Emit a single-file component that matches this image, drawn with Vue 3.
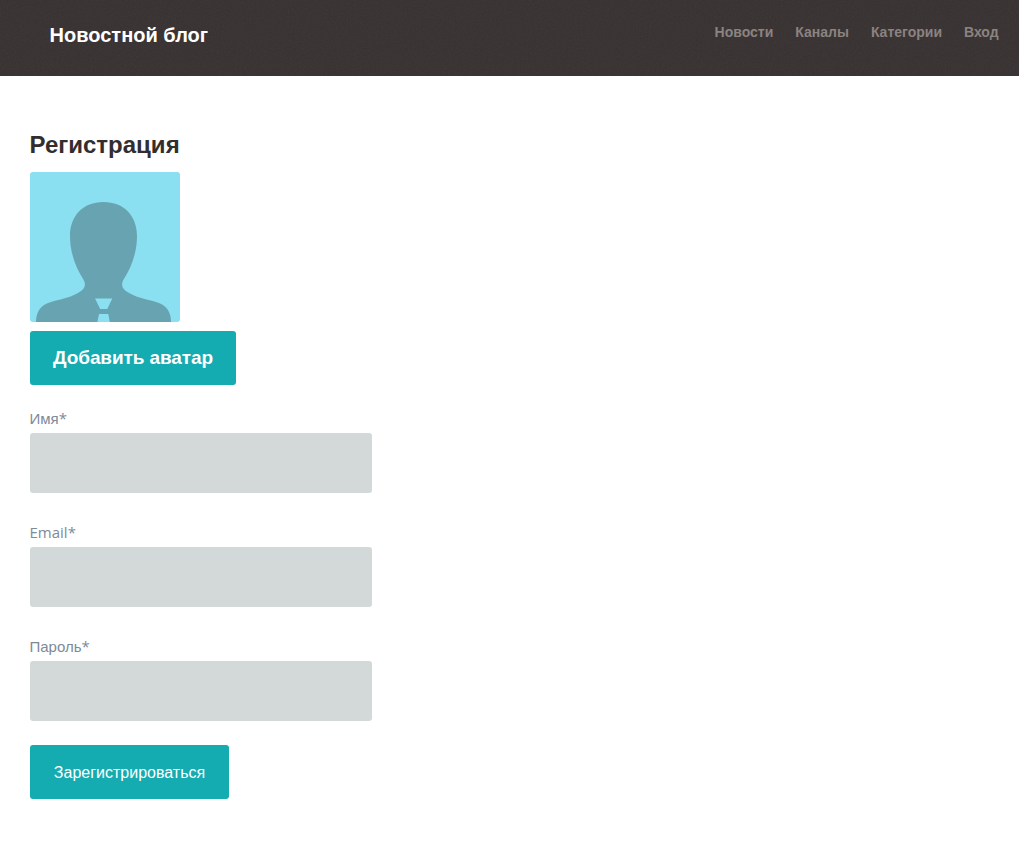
<script setup>
const links = ['Новости', 'Каналы', 'Категории', 'Вход']
const fields = [
  { id: 'name', label: 'Имя', type: 'text' },
  { id: 'email', label: 'Email', type: 'email' },
  { id: 'password', label: 'Пароль', type: 'password' },
]
</script>

<template>
  <div class="page">
    <header class="header">
      <svg class="grain" aria-hidden="true">
        <filter id="grain" x="0" y="0" width="100%" height="100%">
          <feTurbulence type="fractalNoise" baseFrequency="0.6" numOctaves="2" />
          <feColorMatrix type="saturate" values="0" />
        </filter>
        <rect width="100%" height="100%" filter="url(#grain)" />
      </svg>
      <a class="brand">Новостной блог</a>
      <nav class="nav">
        <a v-for="link in links" :key="link">{{ link }}</a>
      </nav>
    </header>
    <main class="main">
      <h1 class="title">Регистрация</h1>
      <svg class="avatar" viewBox="0 0 150 150">
        <rect width="150" height="150" fill="#8adff0" />
        <path
          d="M73.5 30C53 30 40 44 40 64C40 81 46 96 53.4 107.5C57 114 54 118 47 121.500C39 126 29 127.500 21 130C11 133 6 139 6 150H141C141 139 136 133 126 130C118 127.500 108 126 100 121.500C93 118 90 114 93.600 107.500C101 96 107 81 107 64C107 44 94 30 73.500 30Z"
          fill="#68a3b1"
        />
        <path d="M65 126.500H82.300L77.300 137H70.200ZM69 142H78.300L79.800 150H67.400Z" fill="#8adff0" />
      </svg>
      <button class="button upload" type="button">Добавить аватар</button>
      <form class="form">
        <div v-for="field in fields" :key="field.id" class="field">
          <label :for="field.id">{{ field.label }}<span class="mark">*</span></label>
          <input :id="field.id" :type="field.type" />
        </div>
        <button class="button submit" type="button">Зарегистрироваться</button>
      </form>
    </main>
  </div>
</template>

<style>
body {
  margin: 0;
  background: #fff;
}
</style>

<style scoped>
.page {
  min-height: 854px;
  font-family: "Liberation Sans", Arial, sans-serif;
}
.header {
  position: relative;
  box-sizing: border-box;
  height: 76px;
  padding: 0 20.4px 0 49.6px;
  display: flex;
  justify-content: space-between;
  background: #383131;
}
.grain {
  position: absolute;
  inset: 0;
  width: 100%;
  height: 100%;
  opacity: 0.05;
}
.brand {
  position: relative;
  color: #fff;
  font-size: 20px;
  font-weight: 700;
  line-height: 24px;
  padding-top: 23px;
}
.nav {
  position: relative;
  display: flex;
  gap: 22px;
  padding-top: 22px;
  color: #8b8381;
  font-size: 14px;
  font-weight: 700;
  line-height: 20px;
}
.main {
  display: flex;
  flex-direction: column;
  align-items: flex-start;
  padding: 54px 30px 0;
}
.title {
  margin: 0 0 0 -0.5px;
  color: #322e2f;
  font-size: 24px;
  font-weight: 700;
  line-height: 30px;
}
.avatar {
  width: 150px;
  height: 150px;
  margin-top: 12px;
  border-radius: 3px;
}
.button {
  height: 54px;
  padding: 0;
  border: 0;
  border-radius: 3px;
  background: #14abb1;
  color: #fff;
  font-family: inherit;
}
.upload {
  width: 206px;
  margin-top: 9px;
  font-size: 19px;
  letter-spacing: -0.1px;
  font-weight: 700;
}
.form {
  margin-top: 24px;
}
.field {
  margin-bottom: 30px;
}
.field:last-of-type {
  margin-bottom: 24px;
}
.field label {
  display: block;
  height: 24px;
  margin-left: -0.5px;
  color: #7e8a97;
  font-size: 15px;
  line-height: 20px;
}
.field label[for="email"] {
  font-family: "Open Sans", sans-serif;
  line-height: 18px;
}
.mark {
  font-family: "Open Sans", sans-serif;
  line-height: 0;
}
.field input {
  display: block;
  box-sizing: border-box;
  width: 342px;
  height: 60px;
  padding: 0 20px;
  border: 0;
  border-radius: 3px;
  background: #d3d9d9;
}
.submit {
  width: 199px;
  padding-top: 2px;
  font-size: 16px;
}
</style>
